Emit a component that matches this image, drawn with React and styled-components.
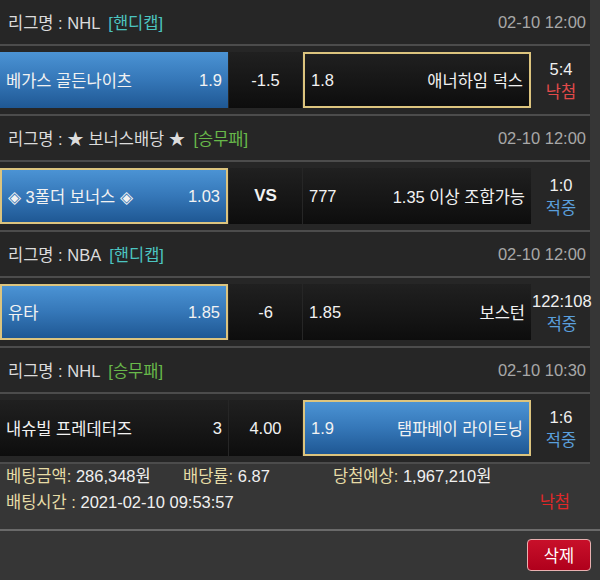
import React from "react";
import styled, { createGlobalStyle } from "styled-components";

const GlobalStyle = createGlobalStyle`
  html, body {
    margin: 0;
    padding: 0;
    background: #363636;
  }
  body {
    font-family: "Liberation Sans", "Noto Sans CJK KR", Arial, sans-serif;
    font-size: 16.5px;
    color: #e8e8e8;
  }
`;

const Page = styled.div`
  width: 600px;
  height: 580px;
  overflow: hidden;
  background: #363636;
`;

const List = styled.div`
  width: 590px;
  background: #262626;
`;

const Header = styled.div`
  height: 46px;
  box-sizing: border-box;
  display: flex;
  align-items: center;
  justify-content: space-between;
  padding: 0 4px 0 8px;
  border-bottom: 2px solid #4c4c4c;
  color: #dcdcdc;
`;

const League = styled.div`
  display: flex;
  align-items: center;
  gap: 8px;
`;

const Tag = styled.span`
  color: ${(p) => (p.$kind === "handicap" ? "#4cc4c0" : "#68b84a")};
`;

const DateText = styled.span`
  color: #a8a8a8;
`;

const Row = styled.div`
  display: grid;
  grid-template-columns: 228px 73px 228px 1fr;
  column-gap: 1px;
  height: 70px;
  padding: 6px 0;
  box-sizing: border-box;
  border-bottom: 2px solid #4c4c4c;
`;

const Cell = styled.div`
  display: flex;
  align-items: center;
  justify-content: space-between;
  padding: 0 6px;
  box-sizing: border-box;
  color: #f2f2f2;
  background: ${(p) =>
    p.$blue
      ? "linear-gradient(to bottom, #4b93d4 0%, #3577b8 50%, #1f5894 100%)"
      : "linear-gradient(to bottom, #202020 0%, #151515 60%, #0d0d0d 100%)"};
  border: ${(p) => (p.$picked ? "2px solid #dcc47e" : "none")};
`;

const MidCell = styled(Cell)`
  justify-content: center;
  font-weight: ${(p) => (p.$bold ? 700 : 400)};
  font-size: ${(p) => (p.$bold ? "17px" : "16.5px")};
`;

const Score = styled.div`
  display: flex;
  flex-direction: column;
  align-items: center;
  justify-content: center;
  gap: 5px;
  color: #f0f0f0;
  line-height: 18px;
  white-space: nowrap;
`;

const Result = styled.span`
  color: ${(p) => (p.$win ? "#5a9fdc" : "#e24a4a")};
`;

const Summary = styled.div`
  padding: 3px 0 0 6px;
  height: 67px;
  box-sizing: border-box;
  border-bottom: 2px solid #6a6a6a;
  display: flex;
  flex-direction: column;
  gap: 7px;
  line-height: 19px;
`;

const SumLine = styled.div`
  display: grid;
  grid-template-columns: ${(p) => p.$cols};
  color: #f0f0f0;
`;

const Label = styled.span`
  color: #e6dca6;
`;

const Lost = styled.span`
  color: #e02828;
  justify-self: end;
  padding-right: 30px;
`;

const Footer = styled.div`
  display: flex;
  justify-content: flex-end;
  padding: 8px 9px 0 0;
`;

const DeleteButton = styled.button`
  width: 64px;
  height: 32px;
  border: 1px solid #e8b0b0;
  border-radius: 4px;
  background: linear-gradient(to bottom, #c8102a 0%, #b0001c 100%);
  color: #fff;
  font-family: inherit;
  font-size: 16.5px;
  cursor: pointer;
`;

const games = [
  {
    league: "NHL",
    tag: "[핸디캡]",
    kind: "handicap",
    date: "02-10 12:00",
    home: { name: "베가스 골든나이츠", odds: "1.9", blue: true },
    mid: "-1.5",
    away: { name: "애너하임 덕스", odds: "1.8", picked: true },
    score: "5:4",
    result: "낙첨",
  },
  {
    league: "★ 보너스배당 ★",
    tag: "[승무패]",
    kind: "wdl",
    date: "02-10 12:00",
    home: { name: "◈ 3폴더 보너스 ◈", odds: "1.03", blue: true, picked: true },
    mid: "VS",
    bold: true,
    away: { name: "1.35 이상 조합가능", odds: "777" },
    score: "1:0",
    result: "적중",
  },
  {
    league: "NBA",
    tag: "[핸디캡]",
    kind: "handicap",
    date: "02-10 12:00",
    home: { name: "유타", odds: "1.85", blue: true, picked: true },
    mid: "-6",
    away: { name: "보스턴", odds: "1.85" },
    score: "122:108",
    result: "적중",
  },
  {
    league: "NHL",
    tag: "[승무패]",
    kind: "wdl",
    date: "02-10 10:30",
    home: { name: "내슈빌 프레데터즈", odds: "3" },
    mid: "4.00",
    away: { name: "탬파베이 라이트닝", odds: "1.9", blue: true, picked: true },
    score: "1:6",
    result: "적중",
  },
];

export default function App() {
  return (
    <>
      <GlobalStyle />
      <Page>
        <List>
          {games.map((g, i) => (
            <div key={i}>
              <Header>
                <League>
                  <span>리그명 : {g.league}</span>
                  <Tag $kind={g.kind}>{g.tag}</Tag>
                </League>
                <DateText>{g.date}</DateText>
              </Header>
              <Row>
                <Cell $blue={g.home.blue} $picked={g.home.picked}>
                  <span>{g.home.name}</span>
                  <span>{g.home.odds}</span>
                </Cell>
                <MidCell $bold={g.bold}>{g.mid}</MidCell>
                <Cell $blue={g.away.blue} $picked={g.away.picked}>
                  <span>{g.away.odds}</span>
                  <span>{g.away.name}</span>
                </Cell>
                <Score>
                  <span>{g.score}</span>
                  <Result $win={g.result === "적중"}>{g.result}</Result>
                </Score>
              </Row>
            </div>
          ))}
        </List>
        <Summary>
          <SumLine $cols="177px 150px 1fr">
            <span>
              <Label>베팅금액:</Label> 286,348원
            </span>
            <span>
              <Label>배당률:</Label> 6.87
            </span>
            <span>
              <Label>당첨예상:</Label> 1,967,210원
            </span>
          </SumLine>
          <SumLine $cols="1fr auto">
            <span>
              <Label>배팅시간 :</Label> 2021-02-10 09:53:57
            </span>
            <Lost>낙첨</Lost>
          </SumLine>
        </Summary>
        <Footer>
          <DeleteButton>삭제</DeleteButton>
        </Footer>
      </Page>
    </>
  );
}
